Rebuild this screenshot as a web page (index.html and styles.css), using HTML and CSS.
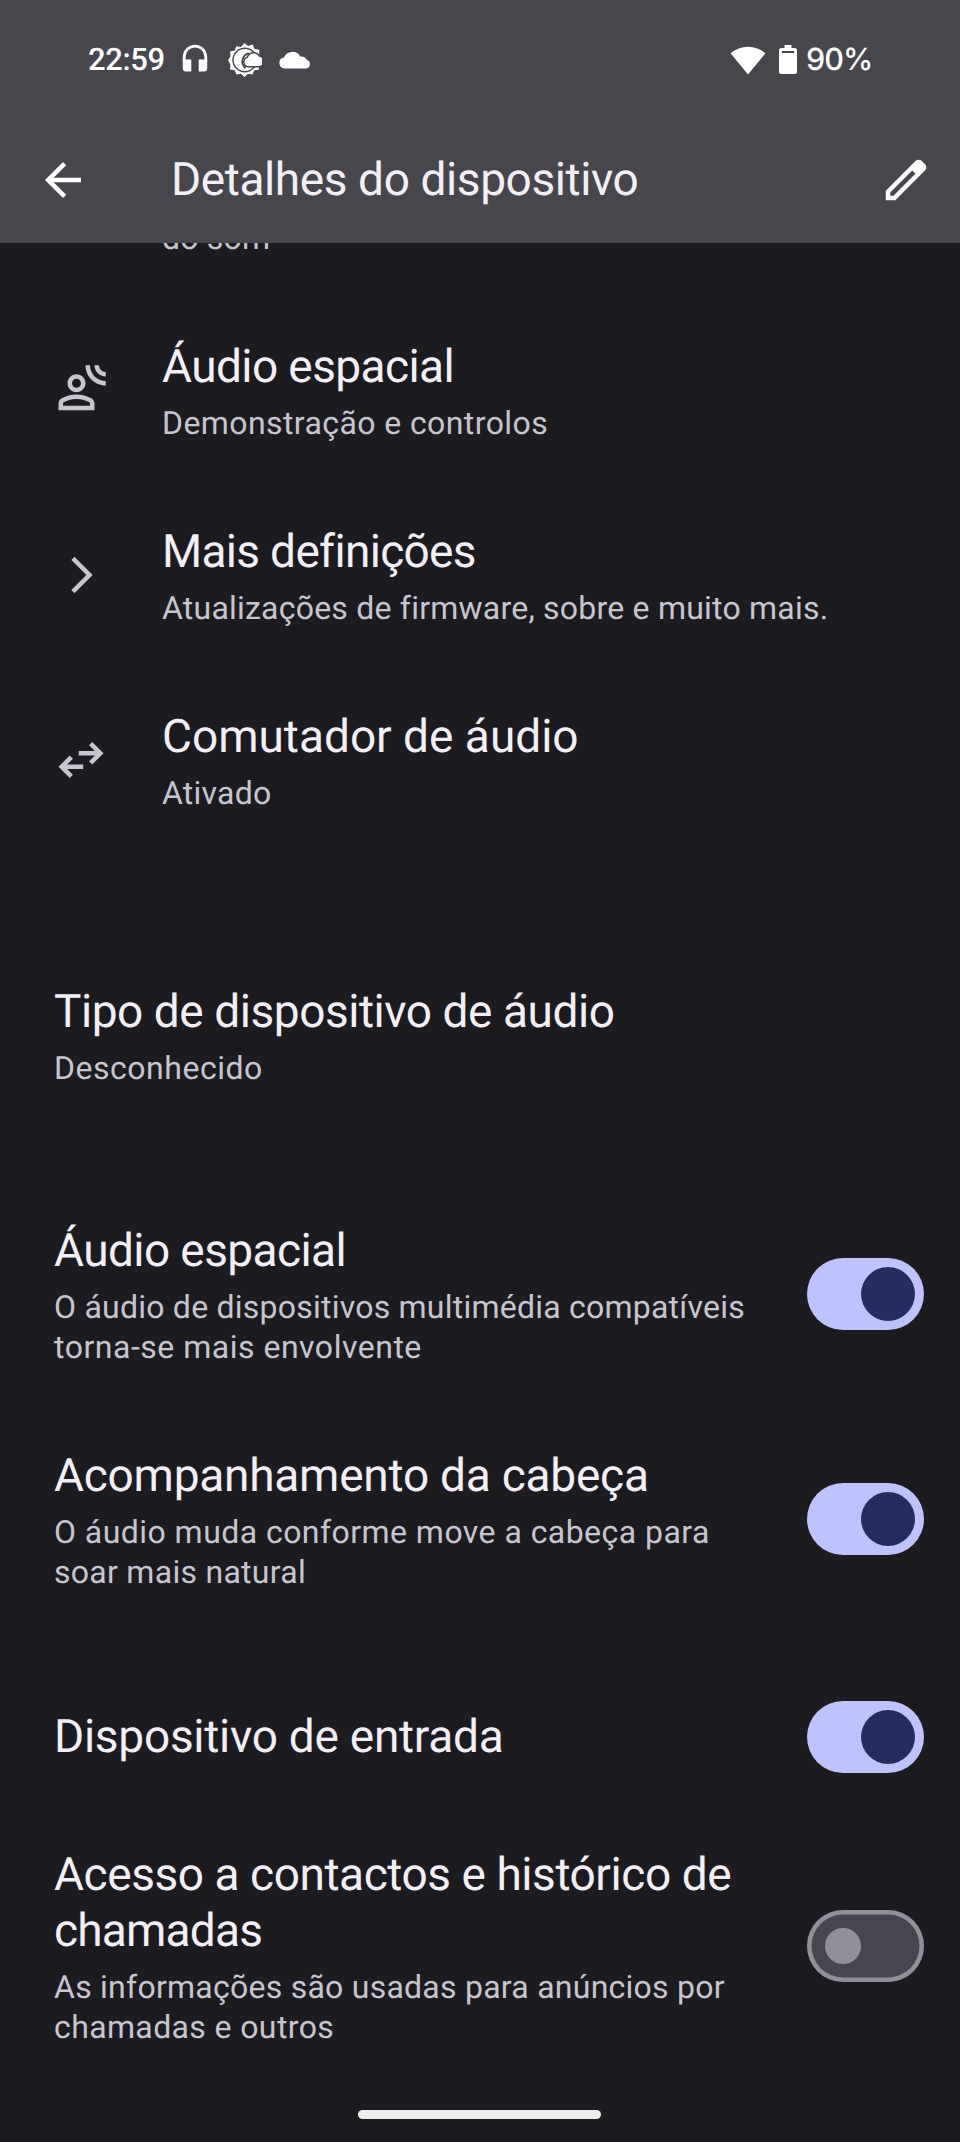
FILE: index.html
```html
<!DOCTYPE html>
<html lang="pt-PT">
<head>
<meta charset="utf-8">
<title>Detalhes do dispositivo</title>
<link rel="stylesheet" href="styles.css">
</head>
<body>
<div class="screen">
  <header class="header">
    <div class="status">
      <span class="clock">22:59</span>
      <svg class="st-headphones" width="28" height="28" viewBox="0 0 28 28"><path d="M3.2 18V13a10.8 10.8 0 0 1 21.6 0v5" fill="none" stroke="#fff" stroke-width="2.8"/><path d="M1.8 15.5h8.5v12H5a3.2 3.2 0 0 1-3.2-3.2zM17.7 15.5h8.5v8.8a3.2 3.2 0 0 1-3.2 3.2h-5.3z" fill="#fff"/></svg>
      <svg class="st-weather" width="34" height="34" viewBox="0 0 34 34"><path d="M16.5 0l3.6 3 4.6-1.4 1.9 4.3 4.8.8-.2 4.8 2 5.6-2 5.4-.4 4.2-4.6.6-1.6 4.3-4.6-.8-3.5 3.200-3.500-3.200-4.600.8-1.700-4.300-4.600-.9.3-4.700L0 17.300l2.600-4L2 8.600l4.700-1 1.600-4.400 4.700.800z" fill="#fff"/><circle cx="16.800" cy="17" r="11.800" fill="none" stroke="#47464c" stroke-width="1.400"/><path d="M21 10.300A8.300 8.300 0 0 0 17.500 25" fill="none" stroke="#47464c" stroke-width="1.700"/><path d="M19.500 23.800a5 5 0 0 1-.2-9.600 6.600 6.600 0 0 1 12-1.200 5.400 5.400 0 0 1-1.300 10.800z" fill="#fff" stroke="#47464c" stroke-width="1.500"/></svg>
      <svg class="st-cloud" width="32" height="18" viewBox="0 0 32 18"><path d="M5.500 17.500a5.500 5.500 0 0 1-.6-10.900 9.200 9.200 0 0 1 16.500-1.100 6.500 6.500 0 0 1 6.500 3.300 4.500 4.500 0 0 1-.7 8.700z" fill="#fff"/></svg>
      <svg class="st-wifi" width="36" height="30" viewBox="0 0 36 30"><path d="M.6 8.300a26.500 26.500 0 0 1 34.800 0L18 29.500z" fill="#fff"/></svg>
      <svg class="st-battery" width="18" height="30" viewBox="0 0 18 30"><path d="M5.500 0h7v3h3a2.500 2.500 0 0 1 2.500 2.500v21a2.500 2.500 0 0 1-2.500 2.500h-13A2.500 2.500 0 0 1 0 26.500v-21A2.500 2.500 0 0 1 2.500 3h3z" fill="#fff"/><path d="M3 6h12v2H3z" fill="#47464c"/></svg>
      <span class="percent">90%</span>
    </div>
    <div class="toolbar">
      <svg class="icon24" viewBox="0 0 24 24"><path fill="#fff" d="M20 11H7.830l5.590-5.590L12 4l-8 8 8 8 1.410-1.410L7.830 13H20z"/></svg>
      <h1 class="heading">Detalhes do dispositivo</h1>
      <svg class="icon24" viewBox="0 0 24 24"><path fill="#fff" d="M5 19h1.425L16.200 9.225 14.775 7.800 5 17.575zm-2 2v-4.250L16.200 3.575q.3-.275.663-.425t.762-.150.775.150.650.450L20.425 5q.3.275.437.650T21 6.400q0 .4-.138.763t-.437.662L7.250 21z"/></svg>
    </div>
  </header>

  <main class="list">
    <div class="sub cut">do som</div>

    <section class="row with-icon spatial">
      <svg class="icon24" viewBox="0 0 24 24"><path fill="#c7c5d0" d="M10 13c2.210 0 4-1.790 4-4s-1.790-4-4-4-4 1.790-4 4 1.790 4 4 4zm0-6c1.100 0 2 .9 2 2s-.9 2-2 2-2-.9-2-2 .9-2 2-2zM16.390 15.560C14.710 14.700 12.530 14 10 14s-4.710.7-6.390 1.560A2.970 2.970 0 0 0 2 18.220V21h16v-2.780c0-1.120-.61-2.150-1.610-2.660zM16 19H4v-.78c0-.38.2-.72.52-.88C5.710 16.730 7.630 16 10 16s4.290.73 5.480 1.340c.32.16.52.5.52.88zM16 1h-2c0 4.970 4.030 9 9 9V8c-3.860 0-7-3.140-7-7zM20 1h-2c0 2.760 2.240 5 5 5V4c-1.660 0-3-1.340-3-3z"/></svg>
      <div class="text"><div class="title">Áudio espacial</div><div class="sub">Demonstração e controlos</div></div>
    </section>

    <section class="row with-icon more">
      <svg class="icon24" viewBox="0 0 24 24"><path fill="#c7c5d0" d="M9.100 3.900 17.200 12 9.100 20.100 7.700 18.700 14.400 12 7.700 5.300z"/></svg>
      <div class="text"><div class="title">Mais definições</div><div class="sub">Atualizações de firmware, sobre e muito mais.</div></div>
    </section>

    <section class="row with-icon switcher">
      <svg class="icon24" viewBox="0 0 24 24"><path fill="#c7c5d0" d="M22 9l-5-5-1.410 1.410L18.170 8H11v2h7.170l-2.580 2.590L17 14zM2 15l5 5 1.410-1.410L5.830 16H13v-2H5.830l2.580-2.590L7 10z"/></svg>
      <div class="text"><div class="title">Comutador de áudio</div><div class="sub">Ativado</div></div>
    </section>

    <section class="row kind">
      <div class="text"><div class="title">Tipo de dispositivo de áudio</div><div class="sub">Desconhecido</div></div>
    </section>

    <section class="row immersive">
      <div class="text"><div class="title">Áudio espacial</div><div class="sub"><span class="l1">O áudio de dispositivos multimédia compatíveis</span><br><span class="l2">torna-se mais envolvente</span></div></div>
      <div class="toggle on"><span class="knob"></span></div>
    </section>

    <section class="row tracking">
      <div class="text"><div class="title">Acompanhamento da cabeça</div><div class="sub"><span class="l1">O áudio muda conforme move a cabeça para</span><br><span class="l2">soar mais natural</span></div></div>
      <div class="toggle on"><span class="knob"></span></div>
    </section>

    <section class="row input">
      <div class="text"><div class="title">Dispositivo de entrada</div></div>
      <div class="toggle on"><span class="knob"></span></div>
    </section>

    <section class="row contacts">
      <div class="text"><div class="title"><span class="t1">Acesso a contactos e histórico de</span><br><span class="t2">chamadas</span></div><div class="sub"><span class="l1">As informações são usadas para anúncios por</span><br><span class="l2">chamadas e outros</span></div></div>
      <div class="toggle"><span class="knob"></span></div>
    </section>
  </main>
  <div class="homebar"></div>
</div>
</body>
</html>
```
FILE: styles.css
```css
* { box-sizing: border-box; }
body {
  margin: 0;
  background: #1c1b20;
  font-family: Roboto, "Liberation Sans", sans-serif;
  text-rendering: geometricPrecision;
}
.screen {
  width: 960px;
  height: 2142px;
  display: flex;
  flex-direction: column;
  overflow: hidden;
}
svg { display: block; flex: none; }

/* Status bar and app bar */
.header { height: 243px; flex: none; background: #47464c; }
.status {
  height: 117px;
  padding: 2px 89px 0 88px;
  display: flex;
  align-items: center;
  color: #fff;
  white-space: nowrap;
}
.clock { width: 93px; font-size: 31px; font-weight: 500; letter-spacing: -0.4px; }
.st-headphones { margin: -3px 19px 0 0; }
.st-weather { margin: 0 17px 0 0; }
.st-cloud { margin-right: auto; }
.st-wifi { margin-right: 13px; }
.st-battery { margin-right: 9px; }
.percent { width: 65px; font: 500 30.500px Inter, sans-serif; letter-spacing: -1px; }
.toolbar {
  height: 126px;
  padding: 0 27px 0 36px;
  display: flex;
  align-items: center;
}
.icon24 { width: 54px; height: 54px; }
.heading {
  flex: 1;
  margin: 0 0 0 81px;
  font-size: 46px;
  font-weight: 400;
  line-height: 56px;
  letter-spacing: -0.4px;
  color: #f3eff7;
}

/* Settings list */
.list { flex: 1; overflow: hidden; }
.cut { margin: -25px 0 40px 162px; letter-spacing: 0.2px; }
.row {
  display: flex;
  align-items: center;
  padding: 41px 36px 40px 54px;
  white-space: nowrap;
}
.with-icon { gap: 54px; }
.row .icon24, .row .toggle { margin-top: -2px; }
.text { flex: 1; display: flex; flex-direction: column; gap: 8px; }
.title { font-size: 46px; line-height: 56px; color: #f3eff7; }
.sub { font-size: 32px; line-height: 40px; color: #c7c5d0; }

.spatial .title, .immersive .title { letter-spacing: -0.59px; }
.spatial .sub { letter-spacing: 0.41px; }
.more .title { letter-spacing: -0.68px; }
.more .sub { letter-spacing: 0.22px; }
.switcher .title { letter-spacing: 0; }
.switcher .sub { letter-spacing: 0.24px; }
.kind { margin: 90px 0 54px; }
.kind .title { letter-spacing: -0.45px; }
.kind .sub { letter-spacing: 0.52px; }
.immersive .l1 { letter-spacing: 0.23px; }
.immersive .l2 { letter-spacing: 0.51px; }
.tracking .title { letter-spacing: -0.24px; }
.tracking .l1 { letter-spacing: 0.45px; }
.tracking .l2 { letter-spacing: 0.28px; }
.input { height: 138px; margin-top: 36px; padding-top: 0; padding-bottom: 0; }
.row.input .toggle { margin-top: 0; }
.input .title { letter-spacing: -0.26px; }
.contacts .t1 { letter-spacing: -0.44px; }
.contacts .t2 { letter-spacing: -0.8px; }
.contacts .l1 { letter-spacing: 0.25px; }
.contacts .l2 { letter-spacing: 0.38px; }

/* Switches */
.toggle {
  flex: none;
  width: 117px;
  height: 72px;
  border-radius: 36px;
  background: #46464f;
  box-shadow: inset 0 0 0 4.5px #918f9a;
  display: flex;
  align-items: center;
  padding-left: 18px;
}
.knob { width: 36px; height: 36px; border-radius: 50%; background: #918f9a; }
.toggle.on {
  background: #bec2ff;
  box-shadow: none;
  justify-content: flex-end;
  padding: 0 9px 0 0;
}
.on .knob { width: 54px; height: 54px; background: #272c60; }

.homebar {
  flex: none;
  width: 243px;
  height: 9px;
  margin: 0 0 23px 358px;
  border-radius: 5px;
  background: #ececec;
}
```
